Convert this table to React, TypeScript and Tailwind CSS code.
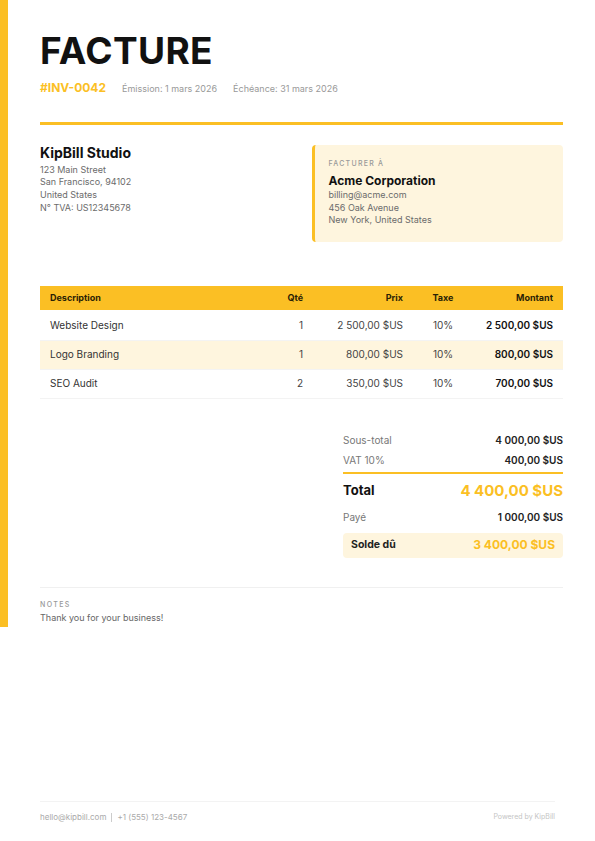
import React from "react";

const items = [
  { d: "Website Design", q: "1", p: "2 500,00 $US", t: "10%", m: "2 500,00 $US" },
  { d: "Logo Branding", q: "1", p: "800,00 $US", t: "10%", m: "800,00 $US" },
  { d: "SEO Audit", q: "2", p: "350,00 $US", t: "10%", m: "700,00 $US" },
];

export default function App() {
  return (
    <div
      className="flex min-h-[841px] w-[595px] flex-col bg-white text-[#1a1a1a]"
      style={{ fontFamily: "Inter, 'Noto Sans', sans-serif" }}
    >
      <div className="flex">
        <div className="w-2 shrink-0 bg-[#fbbf24]" />
        <div className="flex-1 px-8 pt-8 pb-[3px]">
          {/* Header */}
          <div className="text-[37px] font-bold leading-none tracking-[0.01em] text-[#111]">FACTURE</div>
          <div className="mt-[11px] flex items-baseline gap-4 leading-4">
            <span className="text-[12px] font-bold text-[#fbbf24]">#INV-0042</span>
            <span className="text-[9px] text-[#999]">Émission: 1 mars 2026</span>
            <span className="text-[9px] text-[#999]">Échéance: 31 mars 2026</span>
          </div>
          <div className="mt-[25px] h-[3px] bg-[#fbbf24]" />

          {/* Parties */}
          <div className="mt-5 grid grid-cols-2 items-start gap-5">
            <div>
              <div className="text-[14px] font-bold leading-[1.2] text-[#111]">KipBill Studio</div>
              <div className="mt-[2px] text-[9px] leading-[12.6px] text-[#6b6b6b]">
                <div>123 Main Street</div>
                <div>San Francisco, 94102</div>
                <div>United States</div>
                <div>N° TVA: US12345678</div>
              </div>
            </div>
            <div className="rounded-[4px] border-l-[3px] border-[#fbbf24] bg-[#fef5de] pt-[14px] pb-[15px] pl-[14px] pr-3">
              <div className="text-[7px] font-medium uppercase leading-[10px] tracking-[0.18em] text-[#999]">Facturer à</div>
              <div className="mt-[4px] text-[12px] font-bold leading-[16px] text-[#111]">Acme Corporation</div>
              <div className="text-[9px] leading-[12.6px] text-[#6b6b6b]">
                <div>billing@acme.com</div>
                <div>456 Oak Avenue</div>
                <div>New York, United States</div>
              </div>
            </div>
          </div>

          {/* Table */}
          <div className="mt-[44px]">
            <div className="mb-[2px] grid h-6 grid-cols-[1fr_60px_100px_60px_90px] items-center bg-[#fbbf24] text-[9px] font-bold text-[#2a2205]">
              <div className="pl-[10px]">Description</div>
              <div className="pr-[10px] text-right">Qté</div>
              <div className="pr-[10px] text-right">Prix</div>
              <div className="text-center">Taxe</div>
              <div className="pr-[10px] text-right">Montant</div>
            </div>
            {items.map((it, i) => (
              <div
                key={it.d}
                className={`grid h-[29px] grid-cols-[1fr_60px_100px_60px_90px] items-center border-b border-[#f3f3f3] text-[10px] text-[#444] ${i === 1 ? "bg-[#fef5de]" : ""}`}
              >
                <div className="pl-[10px] text-[#333]">{it.d}</div>
                <div className="pr-[10px] text-right">{it.q}</div>
                <div className="pr-[10px] text-right">{it.p}</div>
                <div className="text-center">{it.t}</div>
                <div className="pr-[10px] text-right font-semibold text-[#111]">{it.m}</div>
              </div>
            ))}
          </div>

          {/* Summary */}
          <div className="mt-[32px] flex justify-end">
            <div className="w-[220px]">
              <div className="flex h-5 items-center justify-between text-[10px]">
                <span className="text-[#777]">Sous-total</span>
                <span className="font-semibold text-[#222]">4 000,00 $US</span>
              </div>
              <div className="flex h-5 items-center justify-between text-[10px]">
                <span className="text-[#777]">VAT 10%</span>
                <span className="font-semibold text-[#222]">400,00 $US</span>
              </div>
              <div className="mt-px h-[2px] bg-[#fbbf24]" />
              <div className="flex h-[34px] items-center justify-between">
                <span className="text-[13px] font-bold text-[#111]">Total</span>
                <span className="text-[15px] font-bold text-[#fbbf24]">4 400,00 $US</span>
              </div>
              <div className="flex h-5 items-center justify-between text-[10px]">
                <span className="text-[#777]">Payé</span>
                <span className="font-semibold text-[#222]">1 000,00 $US</span>
              </div>
              <div className="mt-[5px] flex h-[25px] items-center justify-between rounded-[4px] bg-[#fef5de] px-2">
                <span className="text-[10.5px] font-bold text-[#222]">Solde dû</span>
                <span className="text-[12px] font-bold text-[#fbbf24]">3 400,00 $US</span>
              </div>
            </div>
          </div>

          {/* Notes */}
          <div className="mt-[29px] border-t border-[#f0f0f0] pt-[12px]">
            <div className="text-[7px] font-medium uppercase leading-[10px] tracking-[0.2em] text-[#999]">Notes</div>
            <div className="mt-[2px] text-[9px] leading-[12.6px] text-[#666]">Thank you for your business!</div>
          </div>
        </div>
      </div>

      {/* Footer */}
      <div className="mt-auto px-10 pb-[18px]">
        <div className="flex items-center justify-between border-t border-[#f3f3f3] pt-[9px] text-[8px] leading-[12px]">
          <div className="flex items-center text-[#aaa]">
            <span>hello@kipbill.com</span>
            <span className="mx-[5px] h-[9px] w-px bg-[#ccc]" />
            <span>+1 (555) 123-4567</span>
          </div>
          <div className="text-[7px] text-[#c4c4c4]">Powered by KipBill</div>
        </div>
      </div>
    </div>
  );
}
